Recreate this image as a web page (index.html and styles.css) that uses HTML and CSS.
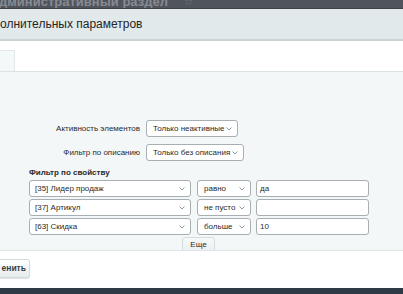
FILE: index.html
```html
<!DOCTYPE html>
<html lang="ru">
<head>
<meta charset="utf-8">
<link rel="stylesheet" href="styles.css">
</head>
<body>
<div class="page">
  <div class="topbar"><span class="toptitle">дминистративный раздел</span><span class="star">☆</span></div>
  <div class="header">олнительных параметров</div>
  <div class="tabs"><div class="tab"></div></div>
  <div class="panel">
    <div class="frow">
      <div class="flabel">Активность элементов</div>
      <div class="sel w1">Только неактивные<svg class="chev" viewBox="0 0 6 4" width="6" height="4"><path d="M0.5 0.5 L3 3 L5.5 0.5" fill="none" stroke="#8a8f93" stroke-width="0.9"/></svg></div>
    </div>
    <div class="frow">
      <div class="flabel">Фильтр по описанию</div>
      <div class="sel w2">Только без описания<svg class="chev" viewBox="0 0 6 4" width="6" height="4"><path d="M0.5 0.5 L3 3 L5.5 0.5" fill="none" stroke="#8a8f93" stroke-width="0.9"/></svg></div>
    </div>
    <div class="props">
      <div class="ptitle">Фильтр по свойству</div>
      <div class="prow">
        <div class="sel wp">[35] Лидер продаж<svg class="chev" viewBox="0 0 6 4" width="6" height="4"><path d="M0.5 0.5 L3 3 L5.5 0.5" fill="none" stroke="#8a8f93" stroke-width="0.9"/></svg></div>
        <div class="sel wo">равно<svg class="chev" viewBox="0 0 6 4" width="6" height="4"><path d="M0.5 0.5 L3 3 L5.5 0.5" fill="none" stroke="#8a8f93" stroke-width="0.9"/></svg></div>
        <div class="inp">да</div>
      </div>
      <div class="prow">
        <div class="sel wp">[37] Артикул<svg class="chev" viewBox="0 0 6 4" width="6" height="4"><path d="M0.5 0.5 L3 3 L5.5 0.5" fill="none" stroke="#8a8f93" stroke-width="0.9"/></svg></div>
        <div class="sel wo">не пусто<svg class="chev" viewBox="0 0 6 4" width="6" height="4"><path d="M0.5 0.5 L3 3 L5.5 0.5" fill="none" stroke="#8a8f93" stroke-width="0.9"/></svg></div>
        <div class="inp"></div>
      </div>
      <div class="prow">
        <div class="sel wp">[63] Скидка<svg class="chev" viewBox="0 0 6 4" width="6" height="4"><path d="M0.5 0.5 L3 3 L5.5 0.5" fill="none" stroke="#8a8f93" stroke-width="0.9"/></svg></div>
        <div class="sel wo">больше<svg class="chev" viewBox="0 0 6 4" width="6" height="4"><path d="M0.5 0.5 L3 3 L5.5 0.5" fill="none" stroke="#8a8f93" stroke-width="0.9"/></svg></div>
        <div class="inp">10</div>
      </div>
      <div class="morerow"><div class="more">Еще</div></div>
    </div>
  </div>
  <div class="btnarea"><div class="btn">енить</div></div>
  <div class="footer"></div>
</div>
</body>
</html>
```
FILE: styles.css
```css
html, body {
  margin: 0;
  padding: 0;
}
body {
  width: 403px;
  height: 294px;
  overflow: hidden;
  font-family: "Liberation Sans", Arial, sans-serif;
  background: #ffffff;
}
.page {
  display: flex;
  flex-direction: column;
  width: 403px;
  height: 294px;
  overflow: hidden;
}
.topbar {
  height: 8px;
  background: #50545d;
  border-bottom: 1px solid #3e4249;
  overflow: hidden;
  display: flex;
  align-items: flex-start;
  white-space: nowrap;
}
.toptitle {
  font-size: 13px;
  font-weight: bold;
  line-height: 14px;
  color: #878b92;
  margin-top: -5px;
  margin-left: -1px;
}
.star {
  font-size: 10px;
  line-height: 10px;
  color: #7d8188;
  margin-top: -3px;
  margin-left: 16px;
}
.header {
  height: 30px;
  line-height: 30px;
  background: #e1e9eb;
  border-bottom: 2px solid #cbd3d6;
  font-size: 12px;
  color: #252525;
  white-space: nowrap;
}
.tabs {
  height: 30px;
  padding-top: 9px;
  box-sizing: border-box;
  background: #ffffff;
}
.tab {
  width: 15px;
  height: 21px;
  box-sizing: border-box;
  background: #f4f8f8;
  border: 1px solid #e2e7e9;
  border-left: none;
  border-bottom: none;
}
.panel {
  height: 180px;
  box-sizing: border-box;
  background: #f4f7f8;
  border-top: 1px solid #dce3e5;
  border-bottom: 1px solid #dfe4e6;
  overflow: hidden;
  padding-top: 48px;
  font-size: 8px;
  color: #2a2a2a;
}
.frow {
  display: flex;
  align-items: center;
  gap: 6px;
  margin-bottom: 7px;
}
.flabel {
  width: 140px;
  text-align: right;
  white-space: nowrap;
}
.sel {
  height: 17px;
  box-sizing: border-box;
  background: #ffffff;
  border: 1px solid #a7afb3;
  border-radius: 3px;
  padding-left: 6px;
  padding-right: 5px;
  line-height: 15px;
  white-space: nowrap;
  display: flex;
  align-items: center;
  justify-content: space-between;
}
.chev {
  flex: none;
}
.w1 { width: 92px; }
.w2 { width: 98px; }
.props {
  margin-top: 5px;
  padding-left: 29px;
}
.ptitle {
  font-weight: bold;
  line-height: 10px;
  margin-bottom: 2px;
}
.prow {
  display: flex;
  gap: 6px;
  margin-bottom: 2px;
}
.wp { width: 162px; padding-left: 5px; }
.wo { width: 54px; padding-left: 6px; }
.inp {
  width: 113px;
  height: 17px;
  box-sizing: border-box;
  background: #ffffff;
  border: 1px solid #a7afb3;
  border-radius: 3px;
  padding-left: 3px;
  line-height: 15px;
  margin-left: -1px;
}
.morerow {
  padding-left: 153px;
}
.more {
  width: 33px;
  height: 20px;
  box-sizing: border-box;
  background: linear-gradient(#f7f9f9, #e7ecee);
  border: 1px solid #d5dcdf;
  border-radius: 3px;
  text-align: center;
  line-height: 14px;
  font-size: 8px;
  color: #2a2a2a;
}
.btnarea {
  height: 37px;
  box-sizing: border-box;
  padding-top: 8px;
  background: #ffffff;
}
.btn {
  width: 30px;
  height: 19px;
  box-sizing: border-box;
  background: linear-gradient(#ffffff, #e6ebed);
  border: 1px solid #d3dadd;
  border-left: none;
  border-radius: 0 3px 3px 0;
  box-shadow: 0 1px 1px rgba(0,0,0,0.12);
  font-size: 8.5px;
  font-weight: bold;
  color: #3a3f44;
  line-height: 17px;
  text-align: right;
  padding-right: 3px;
  white-space: nowrap;
  overflow: hidden;
}
.footer {
  flex: 1;
  background: #2e3a45;
}
```
